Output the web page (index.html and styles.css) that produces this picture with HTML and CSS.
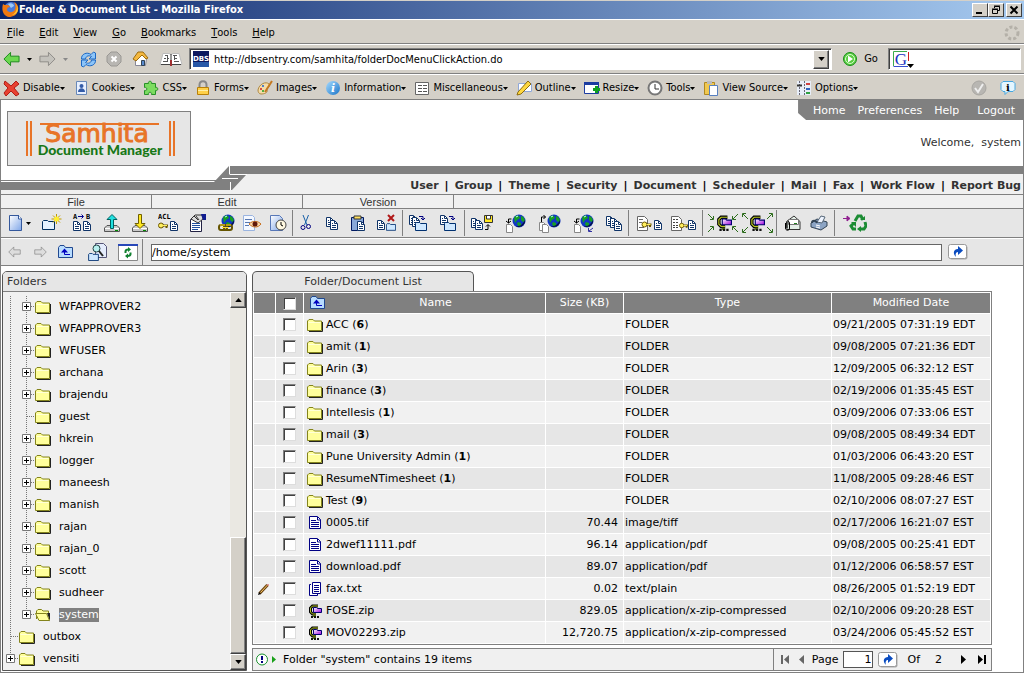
FILE: index.html
```html
<!DOCTYPE html>
<html lang="en">
<head>
  <meta charset="UTF-8" />
  <meta name="viewport" content="width=device-width, initial-scale=1" />
  <title>Folder &amp; Document List</title>
  <link rel="stylesheet" href="styles.css">
</head>
<body>
  <svg class="sprite" aria-hidden="true">
    <defs>
      <linearGradient id="gPage" x1="0" y1="0" x2="1" y2="1"><stop offset="0" stop-color="#fff"/><stop offset="1" stop-color="#7fa6e8"/></linearGradient>
      <linearGradient id="gZip" x1="0" y1="0" x2="1" y2="1"><stop offset="0" stop-color="#fff"/><stop offset="1" stop-color="#a000e0"/></linearGradient>
      <linearGradient id="gOrb" x1="0" y1="0" x2="1" y2="1"><stop offset="0" stop-color="#a8dcff"/><stop offset="1" stop-color="#1874c8"/></linearGradient>
    </defs>
    <symbol id="folder" viewBox="0 0 16 14">
      <path d="M15.500 4v9.500H2" fill="none" stroke="#222" />
      <path d="M.5 12.500V3L2 1.500h4L7.500 3h7v9.500z" fill="#ffff9c" stroke="#84841c"/>
      <path d="M1.500 4.500h12" stroke="#ffffd8"/>
    </symbol>
    <symbol id="folder-open" viewBox="0 0 16 14">
      <path d="M1.500 11V3L3 1.500h3.500L8 3h5.500v3" fill="#ffff9c" stroke="#84841c"/>
      <path d="M12 5l3 8.500V5z" fill="#222"/>
      <path d="M.5 5.500h11l3 7H4z" fill="#ffff9c" stroke="#84841c"/>
    </symbol>
    <symbol id="line" viewBox="0 0 16 22"><path d="M7.500 0v22" stroke="#777" stroke-dasharray="1 1"/></symbol>
    <symbol id="tee" viewBox="0 0 16 22"><path d="M7.500 0v22M8 10.500h8" fill="none" stroke="#777" stroke-dasharray="1 1"/></symbol>
    <symbol id="plus" viewBox="0 0 16 22">
      <path d="M7.500 0v22M8 10.500h8" fill="none" stroke="#777" stroke-dasharray="1 1"/>
      <path d="M3.500 6.500h8v8h-8z" fill="#fff" stroke="#777"/><path d="M5 10.500h5M7.500 8v5" stroke="#000"/>
    </symbol>
    <symbol id="plus-end" viewBox="0 0 16 22">
      <path d="M7.500 0v7M8 10.500h8" fill="none" stroke="#777" stroke-dasharray="1 1"/>
      <path d="M3.500 6.500h8v8h-8z" fill="#fff" stroke="#777"/><path d="M5 10.500h5M7.500 8v5" stroke="#000"/>
    </symbol>
    <symbol id="doc" viewBox="0 0 14 14">
      <path d="M1.500.5h8l3 3v9h-11z" fill="#fff" stroke="#000084"/><path d="M9.500 1v3h3M3 4.500h5M3 6.500h8M3 8.500h8M3 10.500h8" fill="none" stroke="#000084"/>
    </symbol>
    <symbol id="docs" viewBox="0 0 14 14">
      <path d="M4.500.5h8v11h-8zM3 2.500H1.500v11h8V12" fill="#fff" stroke="#000084"/><path d="M6 3.500h5M6 5.500h5M6 7.500h5M6 9.500h5" stroke="#000084"/>
    </symbol>
    <symbol id="mini" viewBox="0 0 8 10">
      <path d="M.5.500h4l3 3v6h-7z" fill="#fff" stroke="#103468"/><path d="M4.500 1v2.500H7M2 3.500h1M2 5.500h4M2 7.500h4" fill="none" stroke="#103468"/>
    </symbol>
    <symbol id="sfolder" viewBox="0 0 12 9">
      <path d="M.5 8.500V1.500l1-1h3l1 1h6v7z" fill="#cfe8ff" stroke="#003070"/>
    </symbol>
    <symbol id="upfolder" viewBox="0 0 16 14">
      <path d="M.5 12.500V2.500l1.500-2h4l1.500 2h7v10z" fill="#b8dcff" stroke="#204890"/>
      <path d="M12 9.500H6.500V6" fill="none" stroke="#0000c0" stroke-width="1"/><path d="M3 7.500l3.500-4 3.500 4z" fill="#0000c0"/>
    </symbol>
    <symbol id="globe" viewBox="0 0 14 14">
      <circle cx="7" cy="7" r="6.500" fill="#1238c4"/><path d="M2 4c1-3 4-3 5-2l1 2-3 2-2 3zM9 2c2 0 4 3 4 5l-2 1-2-2zM6 8l3 1v3l-2 1-2-3z" fill="#18a024"/>
      <path d="M13 6c1 5-5 9-10 6 5 1 8-2 10-6z" fill="#06104a"/><path d="M4 3l2-1" stroke="#bff"/>
    </symbol>
    <symbol id="page" viewBox="0 0 7 9"><path d="M.5.500h4l2 2v6h-6z" fill="#fff" stroke="#888"/></symbol>
    <symbol id="key" viewBox="0 0 10 7">
      <circle cx="3" cy="3.500" r="2.500" fill="#ffef60" stroke="#6b5700"/><path d="M5 3.500h5M8.500 4v2" stroke="#6b5700" stroke-width="2"/><path d="M5 3.500h4" stroke="#ffef60"/>
    </symbol>
    <symbol id="zip" viewBox="0 0 14 14">
      <path d="M10 2H4.500L2.500 4v4L4.500 10H8" fill="none" stroke="#000" stroke-width="3"/>
      <path d="M10 2H4.500L2.500 4v4L4.500 10H8" fill="none" stroke="#b8c820"/>
      <path d="M6.500 11v2" stroke="#587018" stroke-width="3"/><path d="M3 13h8" stroke="#111" stroke-width="2" stroke-dasharray="2 1"/>
      <path d="M5.500 3.500h3l1 1h4v4h-8z" fill="url(#gZip)" stroke="#000070"/>
    </symbol>
    <symbol id="go" viewBox="0 0 20 16">
      <rect x="1.500" y="1.500" width="18" height="14" rx="2" fill="#aaa"/><rect x=".5" y=".5" width="18" height="14" rx="2" fill="#fff" stroke="#999"/>
      <path d="M8 13c-4-4-2-8 2-8V2l5 4.500-5 4.500V8c-2 0-3 2-2 5z" fill="#0a4cc0"/>
    </symbol>
    <symbol id="drop" viewBox="0 0 5 3"><path d="M0 0h5L2.500 3z" fill="currentColor"/></symbol>
    <symbol id="arrow" viewBox="0 0 18 16"><path d="M1 8l7-7v4h9v6H8v4z" stroke-linejoin="round"/></symbol>
    <symbol id="drive" viewBox="0 0 16 7"><path d="M.5 3L3 .5h10L15.500 3v3.500H.5z" fill="#c8c8c8" stroke="#555"/><path d="M1 3.500h14" stroke="#fff"/><path d="M11 5.500h3" stroke="#080"/></symbol>
  </svg>

  <div class="titlebar">
    <svg width="17" height="17" viewBox="0 0 17 17"><circle cx="9" cy="8" r="7" fill="#4a7ad8"/><path d="M6 3c3-2 6 0 6 2l-3 2z" fill="#9cc8f8"/><path d="M1 3c1 1 2 1 3 1 2 0 3 0 4 2-2 0-3 1-3 3 1 3 7 3 8-1 1-3 0-5-1-7 3 1 5 5 4 8-1 5-5 7-9 7-5-1-8-6-6-13z" fill="#f07810"/><path d="M14 3c2 5 0 9-4 11 5 0 8-5 4-11z" fill="#ffc830"/></svg>
    <h1>Folder &amp; Document List - Mozilla Firefox</h1>
    <div class="window-buttons">
      <button type="button" aria-label="Minimize"><svg width="12" height="10"><path d="M2 8h6" stroke="#000" stroke-width="2"/></svg></button>
      <button type="button" aria-label="Restore"><svg width="12" height="10"><path d="M4.500 3V1.500h5v4H8M4 1h6" fill="none" stroke="#000"/><path d="M2.500 4.500h5v4h-5zM2 4h6" fill="none" stroke="#000"/></svg></button>
      <button type="button" aria-label="Close" class="close"><svg width="12" height="10"><path d="M2.500 1.500l7 7M9.500 1.500l-7 7" stroke="#000" stroke-width="2"/></svg></button>
    </div>
  </div>

  <nav class="menubar">
    <button type="button"><u>F</u>ile</button>
    <button type="button"><u>E</u>dit</button>
    <button type="button"><u>V</u>iew</button>
    <button type="button"><u>G</u>o</button>
    <button type="button"><u>B</u>ookmarks</button>
    <button type="button"><u>T</u>ools</button>
    <button type="button"><u>H</u>elp</button>
    <svg class="throbber" width="16" height="16"><circle cx="8" cy="8" r="6" fill="none" stroke="#b4b0a8" stroke-width="3" stroke-dasharray="3 2"/></svg>
  </nav>

  <div class="navbar">
    <button type="button" aria-label="Back"><svg width="17" height="16" fill="#6cd850" stroke="#188818"><use href="#arrow"/></svg></button>
    <button type="button" class="drop" aria-label="Back history"><svg width="5" height="3"><use href="#drop"/></svg></button>
    <button type="button" aria-label="Forward"><svg class="flip" width="17" height="16" fill="#c4c2bc" stroke="#8c8a86"><use href="#arrow"/></svg></button>
    <button type="button" class="drop dim" aria-label="Forward history"><svg width="5" height="3"><use href="#drop"/></svg></button>
    <button type="button" class="wide" aria-label="Reload"><svg width="17" height="17"><path d="M1.500 8C1 3 7 .5 11 3.500l2.500-2.500 2 1v6H9l2.500-2.500C8.500 4 6 5 5.500 8zM15.500 9c.5 5-5.500 7.500-9.500 4.500L3.500 16l-2-1V9H8l-2.500 2.500c3 1.500 5.500.5 6-2.500z" fill="#8cc4f8" stroke="#1c68c4"/></svg></button>
    <button type="button" class="wide" aria-label="Stop"><svg width="16" height="16"><path d="M5 1h6l4 4v6l-4 4H5l-4-4V5z" fill="#b8b6b2" stroke="#9a9894"/><path d="M5.500 5.500l5 5M10.500 5.500l-5 5" stroke="#fff" stroke-width="2"/></svg></button>
    <button type="button" class="wide" aria-label="Home"><svg width="17" height="16"><path d="M3.500 7v7.500h10l1-7L9 3z" fill="#fff" stroke="#889"/><path d="M1 8l5-7h5l5 6-2 1-4-4-6 6z" fill="#f4b840" stroke="#9c6c10"/><path d="M9.500 14.500v-5h3v5z" fill="#5a8cd0" stroke="#345"/></svg></button>
    <button type="button" class="book" aria-label="Bookmarks"><svg width="24" height="14"><path d="M4 1.500h6l2 1 2-1h6l3 11h-9l-2 1-2-1H1z" fill="#fff" stroke="#bbb"/><path d="M2 12.500h9l1 1 1-1h9" fill="none" stroke="#444"/><path d="M12 2v7" stroke="#333"/><path d="M12 8v6" stroke="#a03030" stroke-width="2"/><path d="M6 3.500h3M5 6.500h2M8 6.500h2M4 9.500h4M14 3.500h4M15 6.500h3M15 9.500h5M8.500 4v6M15.500 4v4" stroke="#555"/></svg></button>
    <div class="url-box">
      <svg width="16" height="16"><rect width="16" height="16" fill="#0c1860"/><path d="M0 11h16v5H0z" fill="#2858a8"/><text x="8" y="10" text-anchor="middle" class="fav-text">DBS</text></svg>
      <input type="text" aria-label="Location" value="http://dbsentry.com/samhita/folderDocMenuClickAction.do">
      <button type="button" class="raised" aria-label="Show locations"><svg width="7" height="4" viewBox="0 0 5 3"><use href="#drop"/></svg></button>
    </div>
    <button type="button" class="go-button"><svg width="16" height="16"><circle cx="8" cy="8" r="6.500" fill="#58cc40" stroke="#188c18"/><circle cx="8" cy="8" r="4.500" fill="none" stroke="#d8ffd0"/><path d="M6 4.500L11 8l-5 3.500z" fill="#fff"/></svg>Go</button>
    <div class="search-box">
      <svg width="21" height="17"><path d="M.5 15V.5H14" fill="none" stroke="#3cac4c"/><path d="M.5 15.500H15" stroke="#3850d0"/><path d="M15.500 1v9" stroke="#d02020"/><text x="8" y="14" text-anchor="middle" class="g-text">G</text><path d="M14 13h7l-3.500 4z"/></svg>
      <input type="text" aria-label="Search the web">
    </div>
  </div>

  <div class="devbar">
    <button type="button"><svg width="17" height="17"><path d="M2 1l6 5 5-5 3 3-5 4 5 6-3 2-5-5-5 5-2-3 4-5-4-4z" fill="#e84030" stroke="#b01c14"/></svg>Disable<svg width="5" height="3"><use href="#drop"/></svg></button>
    <button type="button"><svg width="16" height="16"><path d="M3.500 1.500h10v13h-10z" fill="#e8f0ff" stroke="#6888b8"/><circle cx="8.500" cy="6" r="2" fill="#345ca8"/><path d="M5 12c0-5 7-5 7 0z" fill="#345ca8"/></svg>Cookies<svg width="5" height="3"><use href="#drop"/></svg></button>
    <button type="button"><svg width="16" height="16"><path d="M1.500 3.500h4c-1-3 4-3 3 0h4v4c3-1 3 4 0 3v4h-4c1-3-4-3-3 0h-4v-4c3 1 3-4 0-3z" fill="#7cdc60" stroke="#289028"/></svg>CSS<svg width="5" height="3"><use href="#drop"/></svg></button>
    <button type="button"><svg width="16" height="16"><path d="M4.500 8V5c0-5 7-5 7 0v3" fill="none" stroke="#888" stroke-width="2"/><path d="M2.500 7.500h11v7h-11z" fill="#ffd048" stroke="#b88008"/><path d="M3 10.500h10" stroke="#fff0a8"/></svg>Forms<svg width="5" height="3"><use href="#drop"/></svg></button>
    <button type="button"><svg width="16" height="16"><path d="M1 10c1-6 8-9 11-6 2 3-3 4-2 6 1 3-3 4-6 4-2 0-3-2-3-4z" fill="#f4dca8" stroke="#b08840"/><circle cx="4" cy="9" r="1" fill="#d02020"/><circle cx="6" cy="6" r="1" fill="#2060d0"/><circle cx="6" cy="11" r="1" fill="#20a020"/><path d="M15 1L8 12" stroke="#c47820" stroke-width="2"/></svg>Images<svg width="5" height="3"><use href="#drop"/></svg></button>
    <button type="button"><svg width="16" height="16"><circle cx="8" cy="8" r="7" fill="url(#gOrb)"/><text x="8" y="12" text-anchor="middle" class="i-text">i</text></svg>Information<svg width="5" height="3"><use href="#drop"/></svg></button>
    <button type="button"><svg width="16" height="16"><path d="M1.500 2.500h13v12h-13z" fill="#fff" stroke="#666"/><path d="M4 5.500h9M4 8.500h9M4 11.500h9" stroke="#555" stroke-dasharray="4 1"/></svg>Miscellaneous<svg width="5" height="3"><use href="#drop"/></svg></button>
    <button type="button"><svg width="16" height="16"><path d="M2.500 3.500h13v8h-13z" fill="#fff" stroke="#90a8d8"/><path d="M2 12L12 1l3 3L5 14l-4 1z" fill="#ffd840" stroke="#8c6c10"/></svg>Outline<svg width="5" height="3"><use href="#drop"/></svg></button>
    <button type="button"><svg width="16" height="16"><path d="M.5 2.500h14v11H.5z" fill="#fff" stroke="#1c3ca0"/><path d="M0 3.500h15" stroke="#1c3ca0" stroke-width="3"/><path d="M9 9.500h7M12.500 6v7" stroke="#10a020" stroke-width="3"/></svg>Resize<svg width="5" height="3"><use href="#drop"/></svg></button>
    <button type="button"><svg width="16" height="16"><circle cx="8" cy="8" r="6.500" fill="#fff" stroke="#777" stroke-width="2"/><path d="M8 4v5h4" fill="none" stroke="#333"/></svg>Tools<svg width="5" height="3"><use href="#drop"/></svg></button>
    <button type="button"><svg width="16" height="16"><path d="M1.500 2.500h10v12h-10z" fill="#f0c850" stroke="#b08820"/><path d="M4 1h5v3H4z" fill="#bbb"/><path d="M6.500 5.500h8v10h-8z" fill="#fff" stroke="#5880c0"/></svg>View Source<svg width="5" height="3"><use href="#drop"/></svg></button>
    <button type="button"><svg width="16" height="16"><path d="M1 1h14v14H1z" fill="#e8eef8"/><path d="M3.500 1v14M8.500 1v14" stroke="#667" stroke-dasharray="2 1"/><path d="M1 5.500h5" stroke="#333" stroke-width="2"/><path d="M10 3h4v2h-4z" fill="#d04040"/><path d="M10 8h4v2h-4z" fill="#3060c0"/><path d="M10 12h4v2h-4z" fill="#30a040"/></svg>Options<svg width="5" height="3"><use href="#drop"/></svg></button>
    <span class="dev-status">
      <svg width="16" height="16"><circle cx="8" cy="8" r="7" fill="#b8b6b2" stroke="#a8a6a2"/><path d="M4 8l3 4 5-8" fill="none" stroke="#eee" stroke-width="2"/></svg>
      <svg width="16" height="16"><path d="M3 1.500h10l2 2v6l-2 2H8l-3 3v-3H3l-2-2v-6z" fill="#e4f6ff" stroke="#48a8e0"/><text x="8" y="11" text-anchor="middle" class="bubble-text">i</text></svg>
    </span>
  </div>

  <div class="page">
    <header class="masthead">
      <a class="logo" href="#" aria-label="Samhita Document Manager">
        <svg width="184" height="55">
          <path d="M20 10v35M24 10v35M163 10v35M167 10v35" stroke="#e87428" stroke-width="2"/><path d="M33 13h119" stroke="#e87428" stroke-width="2"/>
          <text x="90" y="31" text-anchor="middle" class="logo-name">Samhita</text>
          <text x="93" y="44" text-anchor="middle" class="logo-sub">Document Manager</text>
        </svg>
      </a>
      <div class="account">
        <nav class="topnav"><a href="#">Home</a><a href="#">Preferences</a><a href="#">Help</a><a href="#">Logout</a></nav>
        <p>Welcome,&nbsp; system</p>
      </div>
    </header>

    <div class="band">
      <svg width="246" height="28">
        <path d="M0 25V16h214L229 0h17v28H0z" fill="#f0f0f0"/>
        <path d="M0 14.500h216" stroke="#808080"/><path d="M0 15.500h216" stroke="#fff"/>
        <path d="M0 16h213L228 0h18v9h-1L231 24H0z" fill="#808080"/>
        <path d="M228.500 0v8.500M221 12.500h16M229.500 16v8" stroke="#fff"/><path d="M229 8.500h17" stroke="#fff"/>
      </svg>
      <nav class="modules">
        <a href="#">User</a>|<a href="#">Group</a>|<a href="#">Theme</a>|<a href="#">Security</a>|<a href="#">Document</a>|<a href="#">Scheduler</a>|<a href="#">Mail</a>|<a href="#">Fax</a>|<a href="#">Work Flow</a>|<a href="#">Report Bug</a>
      </nav>
    </div>

    <div class="tabs">
      <button type="button">File</button><button type="button">Edit</button><button type="button">Version</button>
    </div>

    <div class="toolbar">
      <div class="group first">
        <button type="button" class="w34" aria-label="New document"><svg width="24" height="18"><path d="M1.500 1.500h9l3 3v12h-12z" fill="url(#gPage)" stroke="#34589c"/><path d="M10.500 1v4h3" fill="#fff" stroke="#34589c"/><path d="M18 8h5l-2.500 3z"/></svg></button>
        <button type="button" class="w30" aria-label="New folder"><svg width="22" height="18"><path d="M1.500 15.500V7.500l1-1h4l1 1h6v8z" fill="#e4f2ff" stroke="#003060"/><path d="M15.500 0v10M10.500 5h10M12 1.500l7 7M19 1.500l-7 7" stroke="#c09c00"/><circle cx="15.500" cy="5" r="2.500" fill="#ffee30"/></svg></button>
        <button type="button" class="w30" aria-label="Rename"><svg width="20" height="20"><text x="1" y="6" class="px-text">A</text><text x="14" y="6" class="px-text">B</text><path d="M6 3.500h5M9.500 1.500l2 2-2 2" fill="none" stroke="#000090"/><use href="#mini" x="1" y="8" width="8" height="10"/><use href="#mini" x="11" y="8" width="8" height="10"/></svg></button>
        <button type="button" class="w30" aria-label="Upload"><svg width="16" height="19"><use href="#drive" x="0" y="11" width="16" height="7"/><path d="M8 .500l5 5H9.500v9h-3v-9H3z" fill="#20e0e0" stroke="#006060"/></svg></button>
        <button type="button" class="w26" aria-label="Download"><svg width="16" height="19"><use href="#drive" x="0" y="11" width="16" height="7"/><path d="M8 14.500l5-5H9.500v-9h-3v9H3z" fill="#ffe820" stroke="#706000"/></svg></button>
        <button type="button" class="w30" aria-label="Access control"><svg width="21" height="20"><text x="0" y="6" class="px-text">ACL</text><use href="#key" x="0" y="9" width="10" height="7"/><use href="#mini" x="12" y="8" width="8" height="10"/></svg></button>
        <button type="button" class="w30" aria-label="Properties"><svg width="18" height="19"><path d="M1.500 5.500h11v12h-11z" fill="#fff" stroke="#224"/><path d="M3 9.500h8M3 11.500h8M3 13.500h8M3 15.500h6" stroke="#2050a0"/><path d="M2 5l4-4 7 0 1 4-5 4z" fill="#ddd" stroke="#333"/><path d="M12 0h5v6h-3z" fill="#101c90"/><path d="M5 2l4 4M7 2l3 4" stroke="#333"/></svg></button>
        <button type="button" class="w26" aria-label="Link"><svg width="17" height="18"><use href="#globe" x="3" y="0" width="14" height="14"/><rect x="1" y="11" width="8" height="5" rx="2" fill="none" stroke="#665500" stroke-width="2"/><rect x="6" y="11" width="8" height="5" rx="2" fill="none" stroke="#665500" stroke-width="2"/><path d="M2 11h5M8 11h5M4 13.500h7" stroke="#ffe030" stroke-width="1"/></svg></button>
        <button type="button" class="w26" aria-label="View"><svg width="20" height="17"><path d="M1.500.500h9l2 2v13h-11z" fill="#f4f8ff" stroke="#9ab4e0"/><path d="M3 4.500h7M3 7.500h5M3 10.500h4" stroke="#5878b0"/><path d="M7 9c4-4 9-3 12 0-3 4-8 4-12 0z" fill="#fbd8a8" stroke="#c87020"/><circle cx="13" cy="9" r="2.500" fill="#601808"/></svg></button>
        <button type="button" class="w26" aria-label="History"><svg width="18" height="18"><path d="M1.500 1.500h9l3 3v12h-12z" fill="url(#gPage)" stroke="#5878b8"/><circle cx="12" cy="11" r="5" fill="#fff8e0" stroke="#444"/><path d="M12 8v3l2 1" fill="none" stroke="#000"/></svg></button>
      </div>
      <div class="group">
        <button type="button" class="w26" aria-label="Cut"><svg width="12" height="18"><path d="M3 1l4 10M8.500 1l-4 10" stroke="#1860a8"/><circle cx="3" cy="13.500" r="2" fill="none" stroke="#000080"/><circle cx="8.500" cy="12.500" r="2" fill="none" stroke="#000080"/></svg></button>
        <button type="button" class="w26" aria-label="Copy"><svg width="13" height="15"><use href="#mini" x="0" y="1" width="8" height="10"/><use href="#mini" x="4" y="4" width="8" height="10"/></svg></button>
        <button type="button" class="w26" aria-label="Paste"><svg width="16" height="17"><path d="M1.500 2.500h12v13h-12z" fill="#88a8d8" stroke="#001860"/><path d="M4 1h7v3H4z" fill="#ffe060" stroke="#333"/><use href="#mini" x="7" y="6" width="8" height="10"/></svg></button>
        <button type="button" class="w30" aria-label="Delete"><svg width="21" height="18"><use href="#mini" x="1" y="6" width="8" height="10"/><path d="M12 1l6 6M18 1l-6 6" stroke="#b01818" stroke-width="2"/><use href="#sfolder" x="10" y="9" width="10" height="8"/></svg></button>
      </div>
      <div class="group">
        <button type="button" class="w30" aria-label="Copy to folder"><svg width="20" height="18"><use href="#mini" x="1" y="1" width="8" height="10"/><use href="#mini" x="4" y="3" width="8" height="10"/><use href="#sfolder" x="7" y="8" width="12" height="9"/><path d="M11 2.500h4v3M13 4l2 2 2-2" fill="none" stroke="#000080"/></svg></button>
        <button type="button" class="w30" aria-label="Move to folder"><svg width="20" height="18"><use href="#mini" x="2" y="1" width="8" height="10"/><use href="#sfolder" x="6" y="8" width="12" height="9"/><path d="M11 2.500h4v3M13 4l2 2 2-2" fill="none" stroke="#000080"/></svg></button>
      </div>
      <div class="group">
        <button type="button" class="w34" aria-label="Save version"><svg width="22" height="18"><use href="#mini" x="0" y="4" width="8" height="10"/><use href="#mini" x="4" y="6" width="8" height="10"/><path d="M13.500 1.500h8v7h-8z" fill="#ffe820" stroke="#333"/><path d="M15.500 2v3h4V2" fill="#fff" stroke="#333"/><path d="M14 15.500h3V11M15 12.500l2-2 2 2" fill="none" stroke="#000"/></svg></button>
        <button type="button" class="w34" aria-label="Check out"><svg width="20" height="19"><use href="#globe" x="6" y="0" width="14" height="14"/><use href="#page" x="0" y="10" width="7" height="9"/><path d="M2.500 9V5h3M0 7l2.500 2L5 7" fill="none" stroke="#000"/></svg></button>
        <button type="button" class="w34" aria-label="Check in"><svg width="22" height="19"><use href="#globe" x="8" y="0" width="14" height="14"/><use href="#page" x="0" y="8" width="7" height="9"/><use href="#page" x="3" y="10" width="7" height="9"/><path d="M2.500 8V3h4M4.500 1l2 2-2 2" fill="none" stroke="#000"/></svg></button>
        <button type="button" class="w34" aria-label="Undo check out"><svg width="21" height="19"><use href="#globe" x="6" y="0" width="14" height="14"/><use href="#page" x="0" y="10" width="7" height="9"/><path d="M2.500 9V5h3M0 7l2.500 2L5 7" fill="none" stroke="#000"/><path d="M14.500 14v3.500H18M15 17l4-3" fill="none" stroke="#3030a0"/></svg></button>
        <button type="button" class="w26" aria-label="Versions"><svg width="17" height="17"><use href="#mini" x="0" y="1" width="8" height="10"/><use href="#mini" x="4" y="3" width="8" height="10"/><use href="#mini" x="8" y="6" width="8" height="10"/></svg></button>
      </div>
      <div class="group pad">
        <button type="button" class="w34" aria-label="Lock"><svg width="27" height="17"><path d="M1.500 1.500h7l3 3v11h-10z" fill="#fff" stroke="#666"/><path d="M3 4.500h4M3 7.500h3M3 12.500h5" stroke="#666"/><use href="#key" x="5" y="6" width="11" height="7"/><use href="#mini" x="18" y="5" width="8" height="10"/></svg></button>
        <button type="button" class="w34" aria-label="Unlock"><svg width="27" height="17"><path d="M1.500 1.500h7l3 3v11h-10z" fill="#fff" stroke="#666"/><path d="M3 4.500h5M3 7.500h5M3 10.500h5M3 12.500h5" stroke="#444" stroke-dasharray="2 1"/><use href="#key" x="9" y="7" width="9" height="7"/><use href="#mini" x="18" y="5" width="8" height="10"/></svg></button>
      </div>
      <div class="group pad">
        <button type="button" class="w34" aria-label="Zip"><svg width="31" height="20"><use href="#zip" x="8" y="2" width="16" height="16"/><path d="M0 1l5 5M5.500 3v3.500H2M30 1l-5 5M24.500 3v3.500H28M0 19l5-5M2 13.500h3.500V17M30 19l-5-5M28 13.500h-3.500V17" fill="none" stroke="#2c6c1c"/></svg></button>
        <button type="button" class="w34" aria-label="Unzip"><svg width="31" height="20"><use href="#zip" x="7" y="2" width="16" height="16"/><path d="M6 6L1 1M.5 4V.5H4M25 6l5-5M30.500 4V.5H27M6 14l-5 5M.5 16v3.500H4M25 14l5 5M30.500 16v3.500H27" fill="none" stroke="#2c6c1c"/></svg></button>
      </div>
      <div class="group pad">
        <button type="button" class="w26" aria-label="Mail"><svg width="18" height="17"><path d="M2.500 6.500L10 1l6 5.500v8h-13z" fill="#e4efe8" stroke="#333"/><path d="M4.500 4.500h10v5h-10z" fill="#fff" stroke="#777"/><path d="M10 8.500h3" stroke="#208020"/><path d="M1.500 8v5c0 3 4 3 4 0V8c0-2-2.500-2-2.500 0v5" fill="none" stroke="#000"/></svg></button>
        <button type="button" class="w26" aria-label="Fax"><svg width="18" height="16"><path d="M1 8l6-4 10 3v4l-6 4-10-3z" fill="#8ca4c4" stroke="#345"/><path d="M7 7l4-6 4 1-3 6z" fill="#eef4ff" stroke="#567"/><path d="M2 8c0-3 4-3 5 0" fill="none" stroke="#345" stroke-width="2"/><path d="M6 10l4 1M6 12l4 1" stroke="#fff"/></svg></button>
      </div>
      <div class="group last">
        <button type="button" class="w30" aria-label="Recycle bin"><svg width="25" height="18"><path d="M1 4.500h5M5 2l3 2.500L5 7z" fill="#902090" stroke="#902090"/><path d="M13 7l3-5h3l2 4M23 8l1 4-2 3h-4M14 15h-3l-2-3 3-3" fill="none" stroke="#1c8c34" stroke-width="3"/><path d="M18 6h5V2zM19 12v6l-4-3zM9 8l5 0 0 5z" fill="#1c8c34"/></svg></button>
      </div>
    </div>

    <form class="pathbar">
      <button type="button" aria-label="Back"><svg width="13" height="12" fill="#ddd" stroke="#888"><use href="#arrow"/></svg></button>
      <button type="button" aria-label="Forward"><svg class="flip" width="13" height="12" fill="#ddd" stroke="#888"><use href="#arrow"/></svg></button>
      <button type="button" aria-label="Up one level"><svg width="16" height="14"><use href="#upfolder"/></svg></button>
      <button type="button" class="w34" aria-label="Search"><svg width="20" height="19"><path d="M8.500.500h8l3 3v11h-11z" fill="#e4ecfc" stroke="#557"/><use href="#sfolder" x="1" y="10" width="11" height="8"/><circle cx="9.500" cy="5.500" r="3.500" fill="#b8f0f0" stroke="#244"/><path d="M12 8l4 5" stroke="#222" stroke-width="2"/></svg></button>
      <button type="button" aria-label="Refresh"><svg width="20" height="17"><path d="M.5.500h19v16H.5z" fill="#fff" stroke="#888"/><path d="M0 1h20" stroke="#2848b8" stroke-width="2"/><path d="M7.500 9V7.500c0-1 1-2 3-2M12.500 8.500V10c0 1-1 2-3 2" fill="none" stroke="#108030" stroke-width="2"/><path d="M10 3v5l3-2.500zM10 9.500v5L7 12z" fill="#108030"/></svg></button>
      <span class="bar"></span>
      <input type="text" aria-label="Path" value="/home/system">
      <button type="submit" aria-label="Go to path"><svg width="20" height="16"><use href="#go"/></svg></button>
    </form>

    <main class="content">
      <section class="folders">
        <h2>Folders</h2>
        <div class="folder-body">
          <ul class="tree">
            <li><svg><use href="#line"/></svg><svg><use href="#plus"/></svg><svg class="f"><use href="#folder"/></svg><a href="#">WFAPPROVER2</a></li>
            <li><svg><use href="#line"/></svg><svg><use href="#plus"/></svg><svg class="f"><use href="#folder"/></svg><a href="#">WFAPPROVER3</a></li>
            <li><svg><use href="#line"/></svg><svg><use href="#plus"/></svg><svg class="f"><use href="#folder"/></svg><a href="#">WFUSER</a></li>
            <li><svg><use href="#line"/></svg><svg><use href="#plus"/></svg><svg class="f"><use href="#folder"/></svg><a href="#">archana</a></li>
            <li><svg><use href="#line"/></svg><svg><use href="#plus"/></svg><svg class="f"><use href="#folder"/></svg><a href="#">brajendu</a></li>
            <li><svg><use href="#line"/></svg><svg><use href="#tee"/></svg><svg class="f"><use href="#folder"/></svg><a href="#">guest</a></li>
            <li><svg><use href="#line"/></svg><svg><use href="#plus"/></svg><svg class="f"><use href="#folder"/></svg><a href="#">hkrein</a></li>
            <li><svg><use href="#line"/></svg><svg><use href="#plus"/></svg><svg class="f"><use href="#folder"/></svg><a href="#">logger</a></li>
            <li><svg><use href="#line"/></svg><svg><use href="#plus"/></svg><svg class="f"><use href="#folder"/></svg><a href="#">maneesh</a></li>
            <li><svg><use href="#line"/></svg><svg><use href="#plus"/></svg><svg class="f"><use href="#folder"/></svg><a href="#">manish</a></li>
            <li><svg><use href="#line"/></svg><svg><use href="#plus"/></svg><svg class="f"><use href="#folder"/></svg><a href="#">rajan</a></li>
            <li><svg><use href="#line"/></svg><svg><use href="#plus"/></svg><svg class="f"><use href="#folder"/></svg><a href="#">rajan_0</a></li>
            <li><svg><use href="#line"/></svg><svg><use href="#plus"/></svg><svg class="f"><use href="#folder"/></svg><a href="#">scott</a></li>
            <li><svg><use href="#line"/></svg><svg><use href="#plus"/></svg><svg class="f"><use href="#folder"/></svg><a href="#">sudheer</a></li>
            <li><svg><use href="#line"/></svg><svg><use href="#plus-end"/></svg><svg class="f"><use href="#folder-open"/></svg><a href="#" class="selected">system</a></li>
            <li><svg><use href="#tee"/></svg><svg class="f"><use href="#folder"/></svg><a href="#">outbox</a></li>
            <li><svg><use href="#plus-end"/></svg><svg class="f"><use href="#folder"/></svg><a href="#">vensiti</a></li>
          </ul>
          <div class="scrollbar">
            <button type="button" class="raised" aria-label="Scroll up"><svg class="turn" width="7" height="4" viewBox="0 0 5 3"><use href="#drop"/></svg></button>
            <div class="track"></div>
            <div class="thumb"></div>
            <button type="button" class="raised" aria-label="Scroll down"><svg width="7" height="4" viewBox="0 0 5 3"><use href="#drop"/></svg></button>
          </div>
        </div>
      </section>

      <section class="documents">
        <h2>Folder/Document List</h2>
        <table>
          <colgroup><col class="c-edit"><col class="c-check"><col class="c-name"><col class="c-size"><col class="c-type"><col></colgroup>
          <thead>
            <tr><th></th><th><input type="checkbox" aria-label="Select all"></th><th><div class="name-head"><a href="#" aria-label="Up one level"><svg width="16" height="14"><use href="#upfolder"/></svg></a><span>Name</span></div></th><th>Size (KB)</th><th>Type</th><th>Modified Date</th></tr>
          </thead>
          <tbody>
            <tr><td></td><td><input type="checkbox" aria-label="ACC"></td><td><a href="#"><svg><use href="#folder"/></svg>ACC (<b>6</b>)</a></td><td></td><td>FOLDER</td><td>09/21/2005 07:31:19 EDT</td></tr>
            <tr><td></td><td><input type="checkbox" aria-label="amit"></td><td><a href="#"><svg><use href="#folder"/></svg>amit (<b>1</b>)</a></td><td></td><td>FOLDER</td><td>09/08/2005 07:21:36 EDT</td></tr>
            <tr><td></td><td><input type="checkbox" aria-label="Arin"></td><td><a href="#"><svg><use href="#folder"/></svg>Arin (<b>3</b>)</a></td><td></td><td>FOLDER</td><td>12/09/2005 06:32:12 EST</td></tr>
            <tr><td></td><td><input type="checkbox" aria-label="finance"></td><td><a href="#"><svg><use href="#folder"/></svg>finance (<b>3</b>)</a></td><td></td><td>FOLDER</td><td>02/19/2006 01:35:45 EST</td></tr>
            <tr><td></td><td><input type="checkbox" aria-label="Intellesis"></td><td><a href="#"><svg><use href="#folder"/></svg>Intellesis (<b>1</b>)</a></td><td></td><td>FOLDER</td><td>03/09/2006 07:33:06 EST</td></tr>
            <tr><td></td><td><input type="checkbox" aria-label="mail"></td><td><a href="#"><svg><use href="#folder"/></svg>mail (<b>3</b>)</a></td><td></td><td>FOLDER</td><td>09/08/2005 08:49:34 EDT</td></tr>
            <tr><td></td><td><input type="checkbox" aria-label="Pune University Admin"></td><td><a href="#"><svg><use href="#folder"/></svg>Pune University Admin (<b>1</b>)</a></td><td></td><td>FOLDER</td><td>01/03/2006 06:43:20 EST</td></tr>
            <tr><td></td><td><input type="checkbox" aria-label="ResumeNTimesheet"></td><td><a href="#"><svg><use href="#folder"/></svg>ResumeNTimesheet (<b>1</b>)</a></td><td></td><td>FOLDER</td><td>11/08/2005 09:28:46 EST</td></tr>
            <tr><td></td><td><input type="checkbox" aria-label="Test"></td><td><a href="#"><svg><use href="#folder"/></svg>Test (<b>9</b>)</a></td><td></td><td>FOLDER</td><td>02/10/2006 08:07:27 EST</td></tr>
            <tr><td></td><td><input type="checkbox" aria-label="0005.tif"></td><td><a href="#"><svg><use href="#doc"/></svg>0005.tif</a></td><td>70.44</td><td>image/tiff</td><td>02/17/2006 16:21:07 EST</td></tr>
            <tr><td></td><td><input type="checkbox" aria-label="2dwef11111.pdf"></td><td><a href="#"><svg><use href="#doc"/></svg>2dwef11111.pdf</a></td><td>96.14</td><td>application/pdf</td><td>09/08/2005 00:25:41 EDT</td></tr>
            <tr><td></td><td><input type="checkbox" aria-label="download.pdf"></td><td><a href="#"><svg><use href="#doc"/></svg>download.pdf</a></td><td>89.07</td><td>application/pdf</td><td>01/12/2006 06:58:57 EST</td></tr>
            <tr><td><svg class="pencil" width="12" height="12"><path d="M1.500 10.500L9.500 2" stroke="#6c4410" stroke-width="3"/><path d="M2.500 9.500l7-7.500" stroke="#f8c868" stroke-width="1"/><path d="M9 2l1-1 1 1-1 1z" fill="#d05050"/><path d="M0 12l1-3 2 2z"/></svg></td><td><input type="checkbox" aria-label="fax.txt"></td><td><a href="#"><svg><use href="#docs"/></svg>fax.txt</a></td><td>0.02</td><td>text/plain</td><td>08/26/2005 01:52:19 EDT</td></tr>
            <tr><td></td><td><input type="checkbox" aria-label="FOSE.zip"></td><td><a href="#"><svg><use href="#zip"/></svg>FOSE.zip</a></td><td>829.05</td><td>application/x-zip-compressed</td><td>02/10/2006 09:20:28 EST</td></tr>
            <tr><td></td><td><input type="checkbox" aria-label="MOV02293.zip"></td><td><a href="#"><svg><use href="#zip"/></svg>MOV02293.zip</a></td><td>12,720.75</td><td>application/x-zip-compressed</td><td>03/24/2006 05:45:52 EST</td></tr>
          </tbody>
        </table>

        <div class="status">
          <svg width="22" height="13"><circle cx="7" cy="6.500" r="5.500" fill="#fff" stroke="#18902c"/><path d="M7 3v4M7 8v2" stroke="#000080" stroke-width="2"/><path d="M17 3l4 3.500-4 3.500z" fill="#18a018"/></svg>
          <p>Folder "system" contains 19 items</p>
          <form class="pager">
            <button type="button" aria-label="First page"><svg width="9" height="9" fill="#666"><path d="M0 0h2v9H0zM8 0v9L3 4.500z"/></svg></button>
            <button type="button" aria-label="Previous page"><svg width="9" height="9" fill="#666"><path d="M6 0v9L1 4.500z"/></svg></button>
            <label for="pageNo">Page</label>
            <input type="text" id="pageNo" value="1">
            <button type="submit" aria-label="Go to page"><svg width="20" height="16"><use href="#go"/></svg></button>
            <span>Of</span><span class="total">2</span>
            <button type="button" aria-label="Next page"><svg width="9" height="9"><path d="M2 0v9l5-4.500z"/></svg></button>
            <button type="button" aria-label="Last page"><svg width="9" height="9"><path d="M7 0h2v9H7zM1 0v9l5-4.500z"/></svg></button>
          </form>
        </div>
      </section>
    </main>
  </div>
</body>
</html>
```

FILE: styles.css
```css
* {
  margin: 0;
  padding: 0;
  box-sizing: border-box;
}

body {
  min-height: 100vh;
  display: flex;
  flex-direction: column;
  background: #d4d0c8;
  color: #000;
  font-family: "DejaVu Sans", Verdana, sans-serif;
  font-size: 11px;
  line-height: 14px;
}

button,
input {
  font: inherit;
  color: inherit;
  border: none;
  background: none;
}

button {
  display: flex;
  align-items: center;
  justify-content: center;
}

a {
  color: inherit;
  text-decoration: none;
}

svg {
  flex: none;
  display: block;
}

ul {
  list-style: none;
}

.sprite {
  position: absolute;
  width: 0;
  height: 0;
}

.flip {
  transform: scaleX(-1);
}

.turn {
  transform: rotate(180deg);
}

.raised {
  width: 16px;
  height: 16px;
  flex: none;
  background: #d4d0c8;
  border: 1px solid;
  border-color: #fff #404040 #404040 #fff;
  box-shadow: inset -1px -1px 0 #808080;
}

/* browser window */

.titlebar,
.menubar,
.navbar,
.devbar {
  display: flex;
  align-items: center;
  font-family: "DejaVu Sans Condensed", Tahoma, sans-serif;
}

.titlebar {
  height: 20px;
  padding: 0 2px 1px 2px;
  background: linear-gradient(to right, #0a246a, #a6caf0);
  border-top: 1px solid #d4d0c8;
  border-bottom: 1px solid #fff;
}

.titlebar h1 {
  flex: 1;
  color: #fff;
  font-size: 11px;
}

.window-buttons {
  display: flex;
}

.window-buttons button {
  width: 16px;
  height: 14px;
  background: #d4d0c8;
  border: 1px solid;
  border-color: #fff #404040 #404040 #fff;
}

.window-buttons .close {
  margin-left: 2px;
}

.menubar {
  height: 24px;
  padding: 2px 4px 0 7px;
  gap: 15px;
  border-bottom: 1px solid #808080;
}

.throbber {
  margin-left: auto;
}

.navbar {
  height: 30px;
  padding: 0 3px;
  border-top: 1px solid #fff;
  border-bottom: 1px solid #808080;
}

.navbar .drop {
  width: 19px;
}

.navbar .dim {
  color: #888;
}

.navbar .wide {
  width: 26px;
}

.navbar .book {
  width: 36px;
}

.url-box,
.search-box {
  display: flex;
  align-items: center;
  height: 22px;
  background: #fff;
  border: 1px solid;
  border-color: #808080 #fff #fff #808080;
  box-shadow: inset 1px 1px 0 #404040;
}

.url-box {
  flex: 1;
  padding: 0 2px 0 3px;
  gap: 5px;
}

.url-box input {
  flex: 1;
  min-width: 0;
  padding-top: 2px;
}

.url-box .raised {
  height: 19px;
}

.go-button {
  width: 56px;
  gap: 6px;
}

.search-box {
  width: 133px;
  padding-left: 4px;
}

.search-box input {
  flex: 1;
  min-width: 0;
}

.devbar {
  height: 26px;
  padding: 2px 8px 0 3px;
  gap: 8px;
  border-top: 1px solid #fff;
  border-bottom: 1px solid #808080;
}

.devbar button {
  white-space: nowrap;
}

.devbar button svg:first-child {
  margin-right: 3px;
}

.dev-status {
  display: flex;
  gap: 13px;
  margin-left: auto;
}

.fav-text {
  font: bold 7px "DejaVu Sans", sans-serif;
  fill: #fff;
}

.g-text {
  font: 17px "Liberation Serif", serif;
  fill: #1c34c0;
}

.i-text {
  font: italic bold 11px "DejaVu Serif", serif;
  fill: #fff;
}

.bubble-text {
  font: bold 10px "DejaVu Serif", serif;
  fill: #000;
}

.px-text {
  font: bold 7px "DejaVu Sans Mono", monospace;
}

/* page */

.page {
  flex: 1;
  display: flex;
  flex-direction: column;
  background: #fff;
  border: 1px solid #808080;
  border-top: none;
}

.masthead {
  display: flex;
  justify-content: space-between;
  align-items: flex-start;
}

.logo {
  margin: 11px 0 0 6px;
  background: #e6e6e6;
  outline: 1px solid #808080;
  outline-offset: -1px;
}

.logo-name {
  font: 25px "DejaVu Sans", sans-serif;
  fill: #e87428;
  stroke: #e87428;
}

.logo-sub {
  font: 900 14px Lato, sans-serif;
  fill: #187818;
}

.topnav {
  display: flex;
  height: 20px;
  align-items: center;
  gap: 12px;
  padding: 1px 8px 0 15px;
  background: #808080;
  color: #fff;
  clip-path: polygon(0 0, 100% 0, 100% 100%, 8px 100%, 0 13px);
}

.topnav a:last-child {
  margin-left: 6px;
}

.account p {
  margin: 16px 2px 0 0;
  text-align: right;
  color: #333;
}

.band {
  display: flex;
}

.modules {
  flex: 1;
  display: flex;
  align-items: center;
  justify-content: flex-end;
  gap: 6px;
  padding: 3px 2px 0 0;
  background: #f0f0f0;
  border-top: 8px solid #808080;
  font-weight: bold;
  white-space: nowrap;
}

.modules a {
  color: #333;
}

.tabs {
  display: flex;
  height: 15px;
  background: #f0f0f0;
  border-top: 1px solid #808080;
  border-bottom: 1px solid #808080;
}

.tabs button {
  width: 151px;
  border-right: 1px solid #808080;
  font-family: "Liberation Sans", Arial, sans-serif;
  color: #333;
}

.toolbar {
  display: flex;
  height: 29px;
  padding: 1px 0;
  background: #e6e6e6;
  border-bottom: 1px solid #808080;
}

.group {
  display: flex;
  padding: 0 1px 0 0;
  border-right: 1px solid #808080;
}

.group.first {
  padding-left: 2px;
}

.group.pad {
  padding: 0 2px 0 3px;
}

.group.last {
  border: none;
  padding-left: 4px;
}

.w26 {
  width: 26px;
}

.w30 {
  width: 30px;
}

.w34 {
  width: 34px;
}

.pathbar {
  display: flex;
  align-items: center;
  height: 28px;
  padding-right: 52px;
  background: #e6e6e6;
  border-top: 1px solid #fff;
  border-bottom: 1px solid #808080;
}

.pathbar button {
  width: 26px;
}

.pathbar .w34 {
  width: 36px;
}

.pathbar .bar {
  align-self: stretch;
  width: 1px;
  margin: 0 8px 0 1px;
  background: #808080;
}

.pathbar input {
  flex: 1;
  min-width: 0;
  height: 17px;
  margin-right: 3px;
  background: #fff;
  border: 1px solid #666;
}

.content {
  flex: 1;
  display: flex;
  align-items: flex-start;
  gap: 5px;
  padding: 5px 31px 0 1px;
}

.folders {
  width: 245px;
  border: 1px solid #555;
  border-radius: 5px 5px 0 0;
  background: #f0f0f0;
  overflow: hidden;
}

.folders h2,
.documents h2 {
  height: 20px;
  line-height: 19px;
  font-size: 11px;
  font-weight: normal;
  color: #333;
  background: #e6e6e6;
}

.folders h2 {
  padding-left: 4px;
  border-bottom: 1px solid #808080;
}

.folder-body {
  display: flex;
}

.tree {
  flex: 1;
  padding-top: 4px;
}

.tree li {
  display: flex;
  align-items: center;
  height: 22px;
}

.tree svg {
  width: 16px;
  height: 22px;
}

.tree .f {
  height: 14px;
}

.tree a {
  margin-left: 8px;
}

.tree .selected {
  background: #808080;
  color: #fff;
}

.scrollbar {
  display: flex;
  flex-direction: column;
  width: 16px;
}

.track {
  flex: 2;
  background: #eae8e2;
}

.thumb {
  flex: 1;
  background: #d4d0c8;
  border: 1px solid;
  border-color: #fff #404040 #404040 #fff;
  box-shadow: inset -1px -1px 0 #808080;
}

.documents {
  flex: 1;
  min-width: 0;
}

.documents h2 {
  width: 222px;
  text-align: center;
  border: 1px solid #555;
  border-bottom: none;
  border-radius: 5px 5px 0 0;
}

table {
  width: 100%;
  table-layout: fixed;
  border: 1px solid #808080;
  border-collapse: separate;
  border-spacing: 1px;
}

.c-edit {
  width: 21px;
}

.c-check {
  width: 27px;
}

.c-name {
  width: 241px;
}

.c-size {
  width: 77px;
}

.c-type {
  width: 207px;
}

th {
  height: 20px;
  background: #808080;
  color: #fff;
  font-weight: normal;
}

td {
  height: 21px;
  padding: 0 1px;
  background: #f1f1f1;
  white-space: nowrap;
}

tbody tr:nth-child(even) td {
  background: #e6e6e6;
}

td:nth-child(4) {
  text-align: right;
  padding-right: 5px;
}

td a {
  display: flex;
  align-items: center;
  white-space: pre;
}

td a svg {
  width: 16px;
  height: 14px;
  margin: 0 3px 0 2px;
}

.pencil {
  margin-left: 3px;
}

.name-head {
  display: flex;
  align-items: center;
  padding-left: 6px;
}

.name-head span {
  flex: 1;
}

input[type="checkbox"] {
  appearance: none;
  display: block;
  width: 13px;
  height: 13px;
  margin: 0 auto;
  background: #fff;
  border: 1px solid;
  border-color: #808080 #ddd #ddd #808080;
  box-shadow: inset 1px 1px 0 #404040;
}

.status {
  display: flex;
  align-items: center;
  height: 23px;
  margin-top: 3px;
  padding-left: 2px;
  gap: 6px;
  background: #f0f0f0;
  border: 1px solid #808080;
}

.pager {
  display: flex;
  align-items: center;
  align-self: stretch;
  margin-left: auto;
  padding: 0 5px 0 7px;
  gap: 5px;
  border-left: 1px solid #808080;
}

.pager button:first-child {
  margin-right: 3px;
}

.pager input {
  width: 30px;
  height: 17px;
  padding-right: 1px;
  text-align: right;
  background: #fff;
  border: 1px solid #555;
}

.pager span {
  margin-left: 4px;
}

.pager .total {
  margin: 0 12px 0 10px;
}

.pager button:last-child {
  margin-left: 4px;
}
```
